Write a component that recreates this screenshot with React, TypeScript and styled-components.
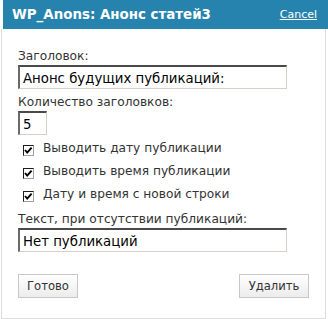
import React from "react";
import styled, {createGlobalStyle} from "styled-components";

const GlobalStyle = createGlobalStyle`
  html, body {
    margin: 0;
    padding: 0;
    background: #ffffff;
  }
  body {
    font-family: "DejaVu Sans", Verdana, sans-serif;
  }
`

const Widget = styled.div`
  width: 328px;
  height: 319px;
  display: flex;
  flex-direction: column;
`

const Header = styled.div`
  height: 31px;
  margin-left: 3px;
  background: #2683ae;
  color: #ffffff;
  display: flex;
  align-items: center;
  justify-content: space-between;
  padding: 0 11px 0 9px;
`

const HeaderTitle = styled.div`
  font-weight: 700;
  font-size: 13.4px;
`

const CancelLink = styled.a`
  font-size: 11px;
  color: #ffffff;
  text-decoration: underline;
  cursor: pointer;
`

const Panel = styled.div`
  margin-left: 1px;
  width: 325px;
  box-sizing: border-box;
  border: 1px solid #dcdcdc;
  border-top: none;
  padding: 19px 16px 20px 16px;
  display: flex;
  flex-direction: column;
  color: #333333;
`

const Label = styled.div`
  font-size: 12.2px;
  line-height: 16px;
  margin-bottom: 1px;
`

const TextInput = styled.input<{ $width: number }>`
  width: ${props => props.$width}px;
  height: 24px;
  box-sizing: border-box;
  border-style: solid;
  border-width: 2px 1px 1px 2px;
  border-color: #4a4a4a #d4d0c8 #d4d0c8 #6a6a6a;
  padding: 2px 4px 0 3px;
  font-family: "DejaVu Sans", Verdana, sans-serif;
  font-size: 13.3px;
  color: #000000;
  background: #ffffff;
  margin-bottom: 5px;
  outline: none;
`

const CheckList = styled.div`
  display: flex;
  flex-direction: column;
  gap: 6px;
  margin-top: -1px;
  padding: 0 0 9px 5px;
`

const CheckRow = styled.label`
  display: flex;
  align-items: center;
  gap: 9px;
  font-size: 12.2px;
  line-height: 16px;
`

const Box = styled.span`
  width: 11px;
  height: 11px;
  box-sizing: border-box;
  border: 1px solid #1c1c1c;
  border-right-color: #a0a0a0;
  border-bottom-color: #a0a0a0;
  background: #ffffff;
  display: flex;
  align-items: center;
  justify-content: center;
  margin-top: 6px;
`

const Buttons = styled.div`
  display: flex;
  justify-content: space-between;
  margin-top: 17px;
`

const Button = styled.button<{ $width: number }>`
  width: ${props => props.$width}px;
  height: 24px;
  padding: 0;
  border: 1px solid #c8c8c8;
  background: linear-gradient(#ffffff, #ececec);
  font-family: "DejaVu Sans", Verdana, sans-serif;
  font-size: 11.6px;
  color: #333333;
  cursor: pointer;
`

const Check = () => (
    <svg width="9" height="9" viewBox="0 0 9 9">
        <path d="M1 4 L3.2 6.6 L7.6 1.6" stroke="#000" strokeWidth="1.9" fill="none"/>
    </svg>
)

const options = [
    'Выводить дату публикации',
    'Выводить время публикации',
    'Дату и время с новой строки',
]

export default function App() {
    return (
        <>
            <GlobalStyle/>
            <Widget>
                <Header>
                    <HeaderTitle>WP_Anons: Анонс статей3</HeaderTitle>
                    <CancelLink>Cancel</CancelLink>
                </Header>
                <Panel>
                    <Label>Заголовок:</Label>
                    <TextInput $width={269} defaultValue="Анонс будущих публикаций:"/>
                    <Label>Количество заголовков:</Label>
                    <TextInput $width={29} defaultValue="5"/>
                    <CheckList>
                        {options.map(text => (
                            <CheckRow key={text}>
                                <Box><Check/></Box>
                                {text}
                            </CheckRow>
                        ))}
                    </CheckList>
                    <Label>Текст, при отсутствии публикаций:</Label>
                    <TextInput $width={269} defaultValue="Нет публикаций"/>
                    <Buttons>
                        <Button $width={60}>Готово</Button>
                        <Button $width={70}>Удалить</Button>
                    </Buttons>
                </Panel>
            </Widget>
        </>
    );
}
